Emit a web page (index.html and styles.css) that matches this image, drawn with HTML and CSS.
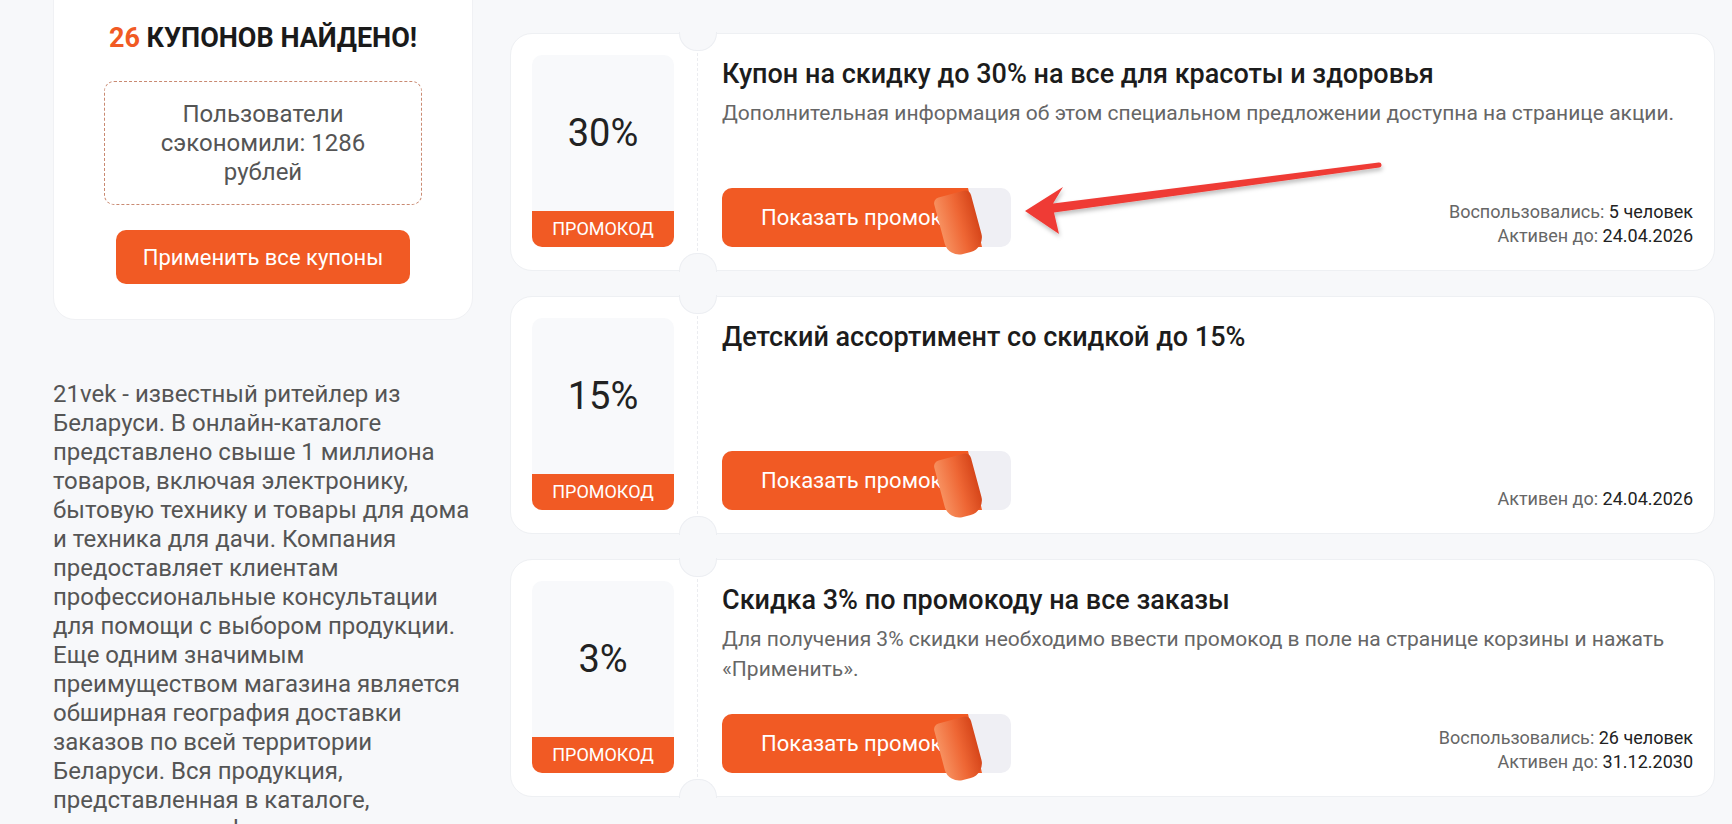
FILE: index.html
```html
<!DOCTYPE html>
<html lang="ru">
<head>
  <meta charset="UTF-8" />
  <meta name="viewport" content="width=device-width, initial-scale=1.0"/>
  <title>Промокоды 21vek</title>
  <link rel="stylesheet" href="styles.css">
</head>
<body>
  <div class="pagina">
    <aside class="lateral">
      <div class="resumo">
        <h2><span class="num">26</span> КУПОНОВ НАЙДЕНО!</h2>
        <div class="economia">Пользователи сэкономили: 1286 рублей</div>
        <button class="btn-todos">Применить все купоны</button>
      </div>
      <p class="sobre">21vek - известный ритейлер из Беларуси. В онлайн-каталоге представлено свыше 1 миллиона товаров, включая электронику, бытовую технику и товары для дома и техника для дачи. Компания предоставляет клиентам профессиональные консультации для помощи с выбором продукции. Еще одним значимым преимуществом магазина является обширная география доставки заказов по всей территории Беларуси. Вся продукция, представленная в каталоге, проходит сертификацию и имеет гарантию.</p>
    </aside>

    <main class="lista">
      <div class="cupom">
        <div class="selo">
          <div class="valor">30%</div>
          <div class="tipo">ПРОМОКОД</div>
        </div>
        <div class="corte"></div>
        <div class="info">
          <h3>Купон на скидку до 30% на все для красоты и здоровья</h3>
          <p class="desc">Дополнительная информация об этом специальном предложении доступна на странице акции.</p>
          <div class="rodape">
            <button class="btn-codigo"><span class="face">Показать промокод</span><span class="dobra"></span></button>
            <div class="meta">
              <div>Воспользовались: <b>5 человек</b></div>
              <div>Активен до: <b>24.04.2026</b></div>
            </div>
          </div>
        </div>
      </div>

      <div class="cupom">
        <div class="selo">
          <div class="valor">15%</div>
          <div class="tipo">ПРОМОКОД</div>
        </div>
        <div class="corte"></div>
        <div class="info">
          <h3>Детский ассортимент со скидкой до 15%</h3>
          <div class="rodape">
            <button class="btn-codigo"><span class="face">Показать промокод</span><span class="dobra"></span></button>
            <div class="meta">
              <div>Активен до: <b>24.04.2026</b></div>
            </div>
          </div>
        </div>
      </div>

      <div class="cupom">
        <div class="selo">
          <div class="valor">3%</div>
          <div class="tipo">ПРОМОКОД</div>
        </div>
        <div class="corte"></div>
        <div class="info">
          <h3>Скидка 3% по промокоду на все заказы</h3>
          <p class="desc">Для получения 3% скидки необходимо ввести промокод в поле на странице корзины и нажать «Применить».</p>
          <div class="rodape">
            <button class="btn-codigo"><span class="face">Показать промокод</span><span class="dobra"></span></button>
            <div class="meta">
              <div>Воспользовались: <b>26 человек</b></div>
              <div>Активен до: <b>31.12.2030</b></div>
            </div>
          </div>
        </div>
      </div>
    </main>
  </div>

  <svg class="seta" width="1732" height="824" viewBox="0 0 1732 824">
    <defs>
      <filter id="sombra" x="-10%" y="-50%" width="120%" height="200%">
        <feDropShadow dx="1" dy="3" stdDeviation="2" flood-color="#000" flood-opacity="0.25"/>
      </filter>
    </defs>
    <path filter="url(#sombra)" fill="#ef3b36"
      d="M1025 211 L1063 187 L1053 203.5 L1378.7 162.5 A2.5 2.5 0 0 1 1379.3 167.5 L1054 212.5 L1059 234 Z"/>
  </svg>
</body>
</html>
```

FILE: styles.css
```css
body {
  font-family: Roboto, "Liberation Sans", Arial, sans-serif;
  background-color: #f7f8fa;
  color: #222;
  margin: 0;
  padding: 0;
  overflow: hidden;
}

.pagina {
  display: flex;
  gap: 37px;
  padding-left: 53px;
}

.lateral {
  width: 420px;
  flex-shrink: 0;
}

.resumo {
  margin-top: -22px;
  background-color: white;
  border: 1px solid #f0f1f4;
  border-radius: 22px;
  padding: 42px 0 35px;
  text-align: center;
}

.resumo h2 {
  margin: 0;
  font-size: 27px;
  line-height: 35px;
  font-weight: 700;
  color: #1a1a1a;
}

.resumo .num {
  color: #f15a24;
}

.economia {
  margin: 25px 50px 0;
  padding: 18px 40px;
  border: 1px dashed #c98a72;
  border-radius: 10px;
  font-size: 24px;
  line-height: 28.8px;
  color: #555;
}

.btn-todos {
  margin-top: 25px;
  width: 294px;
  height: 54px;
  background-color: #f15a24;
  color: white;
  border: none;
  border-radius: 10px;
  font-family: inherit;
  font-size: 22px;
  cursor: pointer;
}

.sobre {
  margin: 60px 0 0;
  font-size: 24px;
  line-height: 29px;
  color: #555;
}

.lista {
  width: 1205px;
  padding-top: 33px;
  display: flex;
  flex-direction: column;
  gap: 25px;
}

.cupom {
  box-sizing: border-box;
  height: 238px;
  display: flex;
  padding: 21px 21px 23px;
  background-color: white;
  border: 1px solid #eef0f3;
  border-radius: 22px;
}

.selo {
  width: 142px;
  flex-shrink: 0;
  display: flex;
  flex-direction: column;
  background-color: #f8f9fb;
  border-radius: 10px;
  overflow: hidden;
}

.selo .valor {
  flex: 1;
  display: flex;
  align-items: center;
  justify-content: center;
  font-size: 38px;
  color: #222;
}

.selo .tipo {
  height: 36px;
  line-height: 36px;
  text-align: center;
  background-color: #f15a24;
  color: white;
  font-size: 18px;
}

.corte {
  position: relative;
  margin: -22px 24px -24px 23px;
  border-left: 1px dashed #ebecf0;
}

.corte::before,
.corte::after {
  content: "";
  position: absolute;
  left: -19px;
  width: 36px;
  height: 18px;
  background-color: #f7f8fa;
  border: 1px solid #eceef2;
}

.corte::before {
  top: -1px;
  border-top: none;
  border-radius: 0 0 18px 18px;
}

.corte::after {
  bottom: -1px;
  border-bottom: none;
  border-radius: 18px 18px 0 0;
}

.info {
  flex: 1;
  display: flex;
  flex-direction: column;
}

.info h3 {
  margin: 2px 0 0;
  font-size: 27px;
  line-height: 34px;
  font-weight: 500;
  color: #1c1c1c;
}

.info .desc {
  margin: 7px 0 0;
  font-size: 21px;
  line-height: 30px;
  color: #666;
}

.rodape {
  margin-top: auto;
  display: flex;
  justify-content: space-between;
  align-items: flex-end;
}

.btn-codigo {
  position: relative;
  width: 289px;
  height: 59px;
  padding: 0;
  border: none;
  border-radius: 10px;
  background-color: #efeff4;
  font-family: inherit;
  cursor: pointer;
}

.btn-codigo .face {
  display: flex;
  align-items: center;
  height: 100%;
  padding-left: 39px;
  border-radius: 10px;
  background-color: #f15a24;
  color: white;
  font-size: 22px;
  white-space: nowrap;
  clip-path: polygon(0 0, 246px 0, 260px 100%, 0 100%);
}

.btn-codigo .dobra {
  position: absolute;
  left: 218px;
  top: 5px;
  width: 38px;
  height: 61px;
  border-radius: 6px 6px 15px 15px;
  background: linear-gradient(90deg, #f7905f, #ee6634 55%, #d6461a);
  transform: rotate(-15deg);
}

.meta {
  text-align: right;
  font-size: 18px;
  line-height: 23.4px;
  color: #666;
}

.meta b {
  font-weight: 400;
  color: #222;
}

.seta {
  position: absolute;
  left: 0;
  top: 0;
  pointer-events: none;
}
```
